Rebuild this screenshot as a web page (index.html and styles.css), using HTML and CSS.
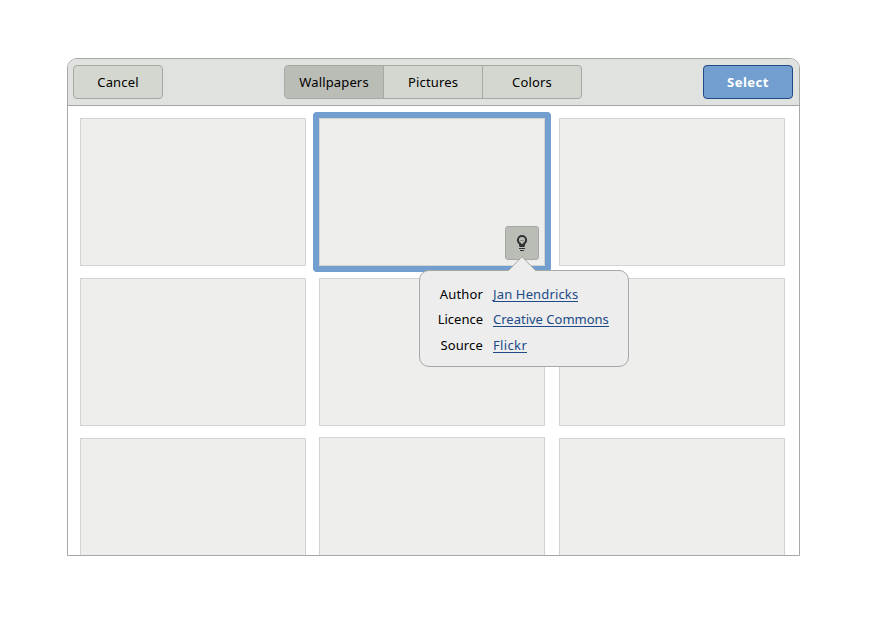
FILE: index.html
```html
<!DOCTYPE html>
<html lang="en">
<head>
<meta charset="utf-8">
<title>Select Background</title>
<link rel="stylesheet" href="styles.css">
</head>
<body>
<main class="window">
  <header class="headerbar">
    <button class="button cancel"><span>Cancel</span></button>
    <nav class="tabs">
      <button class="tab active"><span>Wallpapers</span></button>
      <button class="tab"><span>Pictures</span></button>
      <button class="tab"><span>Colors</span></button>
    </nav>
    <button class="button select"><span>Select</span></button>
  </header>
  <section class="gallery">
    <div class="card"></div>
    <div class="card selected">
      <button class="info" aria-label="Details">
        <svg width="16" height="18" viewBox="0 0 16 18">
          <path d="M6.200 11V9.600C4.400 8.800 3.900 7.400 3.900 6a4.100 4.100 0 0 1 8.200 0c0 1.400-.5 2.800-2.300 3.600V11" fill="none" stroke="#2e3436" stroke-width="2"/>
          <path d="M6 6.500h4" fill="none" stroke="#2e3436" opacity=".35"/>
          <path d="M5 10h6v2l-1 1H6l-1-1zM5 14h6v1H5zM6 16h4v1H6z" fill="#2e3436"/>
        </svg>
      </button>
      <aside class="popover">
        <svg class="arrow" width="30" height="16" viewBox="0 0 30 16">
          <path d="M1 16V14.500H1.500L15 .7 28.500 14.500H29V16z" fill="#ededed"/>
          <path d="M0 14.500H1.500L15 .7 28.500 14.500H30" fill="none" stroke="#a6a8a6"/>
        </svg>
        <dl class="details">
          <dt>Author</dt><dd><a class="author">Jan Hendricks</a></dd>
          <dt class="narrow">Licence</dt><dd><a class="narrow">Creative Commons</a></dd>
          <dt>Source</dt><dd><a class="source">Flickr</a></dd>
        </dl>
      </aside>
    </div>
    <div class="card"></div>
    <div class="card"></div>
    <div class="card"></div>
    <div class="card"></div>
    <div class="card"></div>
    <div class="card raised"></div>
    <div class="card"></div>
  </section>
</main>
</body>
</html>
```
FILE: styles.css
```css
* { box-sizing: border-box; }
body {
  margin: 0;
  padding: 58px 0 0 67px;
  background: #fff;
  color: #000;
  font: 13px/18px "Noto Sans", sans-serif;
  letter-spacing: .15px;
}
button {
  padding: 0;
  font: inherit;
  color: inherit;
  letter-spacing: inherit;
}
.window {
  width: 733px;
  height: 498px;
  border: 1px solid #a6a8a6;
  border-radius: 10px 10px 0 0;
  background: #fff;
  overflow: hidden;
}
.headerbar {
  display: flex;
  justify-content: space-between;
  height: 47px;
  padding: 6px 6px 0 5px;
  border-bottom: 1px solid #a1a5a3;
  background: #e0e2df;
}
.button {
  width: 90px;
  height: 34px;
  border: 1px solid #a6a8a6;
  border-radius: 4px;
  background: #d3d7cf;
}
.select {
  border-color: #204a87;
  background: #729fcf;
  color: #fff;
  font-weight: 700;
  letter-spacing: .5px;
}
.tabs {
  display: flex;
  width: 298px;
  height: 34px;
  border: 1px solid #a6a8a6;
  border-radius: 4px;
  background: #d3d7cf;
  overflow: hidden;
}
.tab {
  flex: 1;
  border: 0;
  border-right: 1px solid #a6a8a6;
  background: none;
}
.tab:last-child { border-right: 0; }
.tab.active { background: #babdb6; }
.gallery {
  display: grid;
  grid-template-columns: 226px 227px 226px;
  grid-auto-rows: 148px;
  gap: 12px 13px;
  padding: 12px 0 0 12px;
}
.card {
  width: 226px;
  border: 1px solid #d3d4d0;
  background: #eeeeec;
}
.raised { margin-top: -1px; }
.selected {
  position: relative;
  z-index: 1;
}
.selected::before {
  content: "";
  position: absolute;
  inset: -7px;
  border: 6px solid #729fcf;
  border-radius: 4px;
}
.info {
  position: absolute;
  right: 5px;
  bottom: 5px;
  display: flex;
  align-items: center;
  justify-content: center;
  width: 34px;
  height: 34px;
  border: 1px solid #a6a8a6;
  border-radius: 3px;
  background: #babdb6;
}
.popover {
  position: absolute;
  left: 99px;
  top: 151px;
  width: 210px;
  height: 97px;
  padding: 11px 0 0 12px;
  border: 1px solid #a6a8a6;
  border-radius: 10px;
  background: #ededed;
}
.arrow {
  position: absolute;
  left: 87px;
  top: -15px;
}
.details {
  display: grid;
  grid-template-columns: 51px 1fr;
  grid-template-rows: 25px 26px 25px;
  column-gap: 10px;
  margin: 0;
  line-height: 25px;
}
.details dt { text-align: right; }
.details dd { margin: 0; }
.details .narrow { letter-spacing: 0; }
.details .source { letter-spacing: .35px; }
.details a {
  display: inline-block;
  height: 16px;
  line-height: 16px;
  border-bottom: 1px solid #204a87;
  color: #204a87;
  white-space: nowrap;
}
```
